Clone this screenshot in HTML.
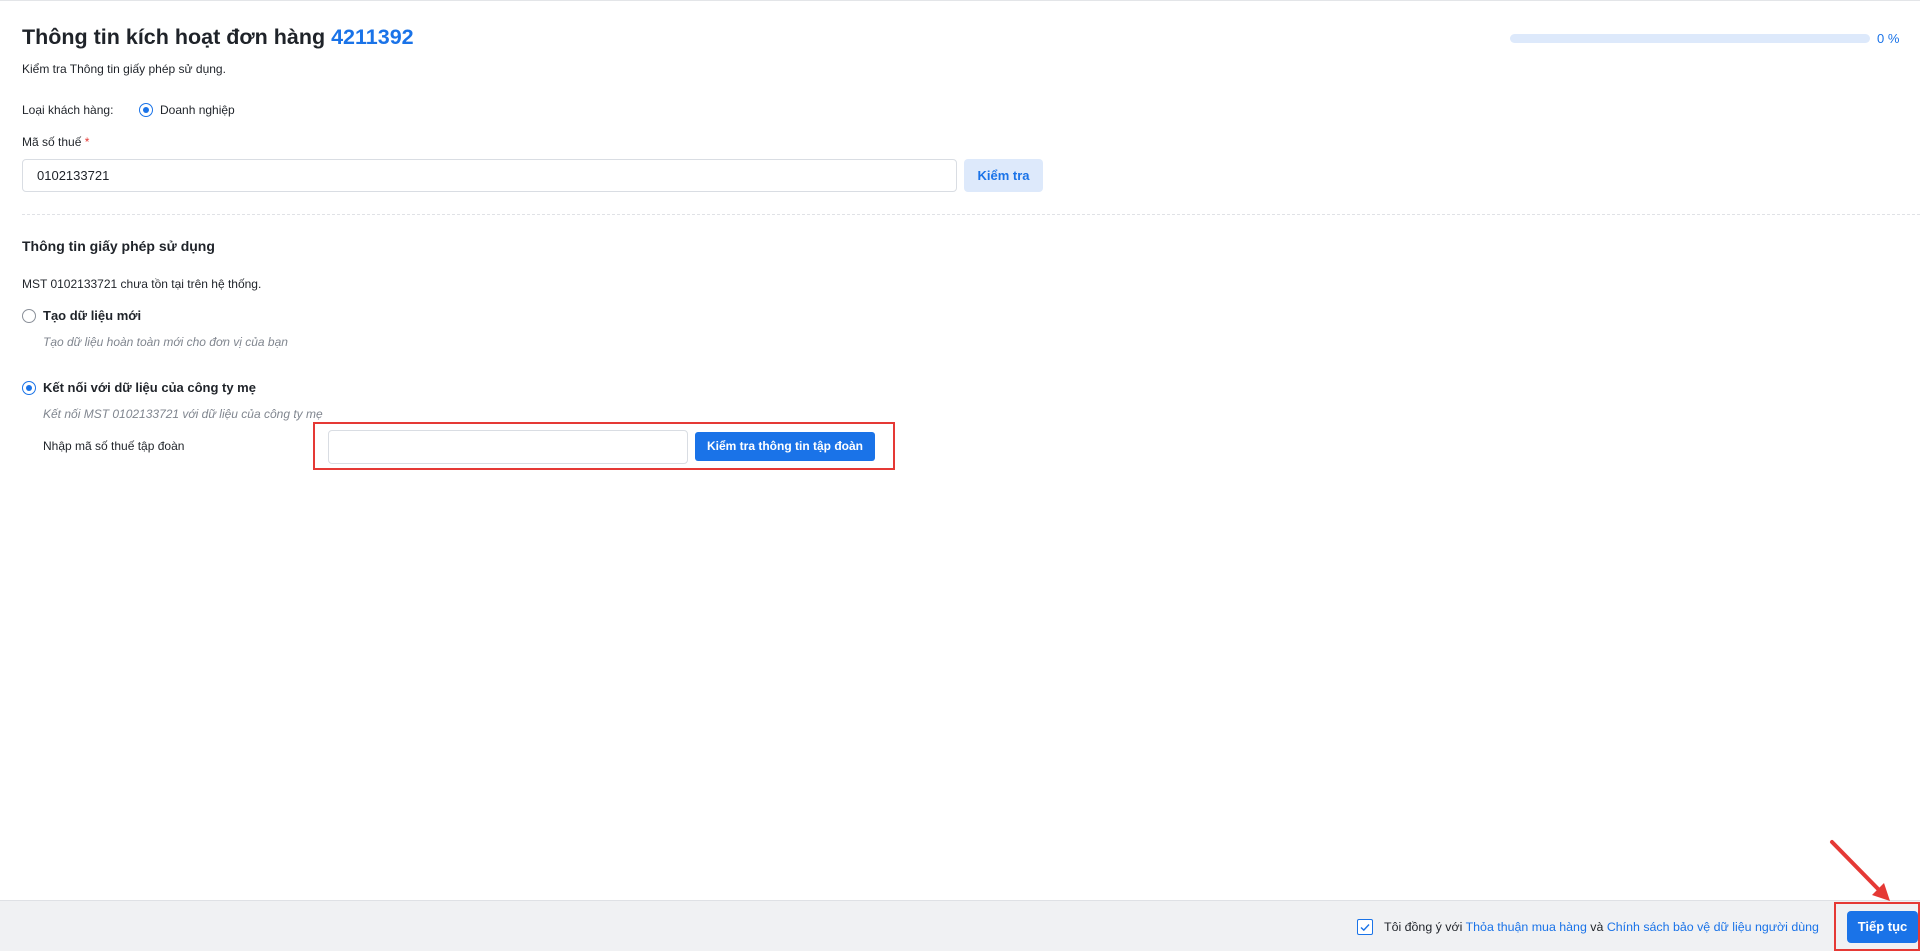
<!DOCTYPE html>
<html><head><meta charset="utf-8"><style>
*{box-sizing:border-box;margin:0;padding:0}
body{width:1920px;height:951px;position:relative;background:#fff;font-family:"Liberation Sans",Arial,sans-serif;color:#1f2329;overflow:hidden;font-size:13px}
.a{position:absolute;white-space:nowrap}
.radio{position:absolute;width:14px;height:14px;border-radius:50%;border:1px solid #8a9099;background:#fff}
.radio.on{border-color:#1a73e8}
.radio.on::after{content:"";position:absolute;left:3px;top:3px;width:6px;height:6px;border-radius:50%;background:#1a73e8}
.inp{position:absolute;border:1px solid #d9dde3;border-radius:4px;background:#fff}
.it{font-style:italic;color:#80868f}
</style></head><body>
<div class="a" style="left:0;top:0;width:1920px;height:1px;background:#e3e5e8"></div>
<div class="a" style="left:22px;top:25px;font-size:21.5px;font-weight:bold;color:#1f2329">Thông tin kích hoạt đơn hàng <span style="color:#1a73e8">4211392</span></div>
<div class="a" style="left:22px;top:62px;font-size:12px">Kiểm tra Thông tin giấy phép sử dụng.</div>
<div class="a" style="left:1510px;top:34px;width:360px;height:9px;border-radius:5px;background:#dde9fb"></div>
<div class="a" style="left:1877px;top:31px;font-size:13px;color:#1a73e8">0 %</div>

<div class="a" style="left:22px;top:103px;font-size:12px">Loại khách hàng:</div>
<div class="radio on" style="left:139px;top:103px"></div>
<div class="a" style="left:160px;top:103px;font-size:12px">Doanh nghiệp</div>

<div class="a" style="left:22px;top:135px;font-size:12px">Mã số thuế <span style="color:#e53935">*</span></div>
<div class="inp" style="left:22px;top:159px;width:935px;height:33px"></div>
<div class="a" style="left:37px;top:168px;font-size:13px">0102133721</div>
<div class="a" style="left:964px;top:159px;width:79px;height:33px;border-radius:4px;background:#dde9fb;color:#1a73e8;font-weight:bold;font-size:13px;text-align:center;line-height:33px">Kiểm tra</div>
<div class="a" style="left:22px;top:214px;width:1898px;border-top:1px dashed #e0e2e6"></div>

<div class="a" style="left:22px;top:238px;font-size:14px;font-weight:bold">Thông tin giấy phép sử dụng</div>
<div class="a" style="left:22px;top:277px;font-size:12px">MST 0102133721 chưa tồn tại trên hệ thống.</div>
<div class="radio" style="left:22px;top:309px"></div>
<div class="a" style="left:43px;top:308px;font-size:13px;font-weight:bold">Tạo dữ liệu mới</div>
<div class="a it" style="left:43px;top:335px;font-size:12px">Tạo dữ liệu hoàn toàn mới cho đơn vị của bạn</div>
<div class="radio on" style="left:22px;top:381px"></div>
<div class="a" style="left:43px;top:380px;font-size:13px;font-weight:bold">Kết nối với dữ liệu của công ty mẹ</div>
<div class="a it" style="left:43px;top:407px;font-size:12px">Kết nối MST 0102133721 với dữ liệu của công ty mẹ</div>
<div class="a" style="left:43px;top:439px;font-size:12px">Nhập mã số thuế tập đoàn</div>
<div class="a" style="left:313px;top:422px;width:582px;height:48px;border:2px solid #e53935"></div>
<div class="inp" style="left:328px;top:430px;width:360px;height:34px"></div>
<div class="a" style="left:695px;top:432px;width:180px;height:29px;border-radius:3px;background:#1a73e8;color:#fff;font-weight:bold;font-size:12px;text-align:center;line-height:29px">Kiểm tra thông tin tập đoàn</div>

<div class="a" style="left:0;top:900px;width:1920px;height:51px;background:#f0f1f3;border-top:1px solid #dfe1e5"></div>
<div class="a" style="left:1357px;top:919px;width:16px;height:16px;border:1px solid #1a73e8;border-radius:2px;background:#fff"></div>
<svg class="a" style="left:1357px;top:919px" width="16" height="16"><path d="M4 8.5l2.8 2.6L12 5.5" fill="none" stroke="#1a73e8" stroke-width="1.4"/></svg>
<div class="a" style="left:1384px;top:920px;font-size:12.4px;color:#1f2329">Tôi đồng ý với <span style="color:#1a73e8">Thỏa thuận mua hàng</span> và <span style="color:#1a73e8">Chính sách bảo vệ dữ liệu người dùng</span></div>
<div class="a" style="left:1834px;top:902px;width:86px;height:49px;border:2px solid #e53935"></div>
<div class="a" style="left:1847px;top:911px;width:71px;height:32px;border-radius:4px;background:#1a73e8;color:#fff;font-weight:bold;font-size:13px;text-align:center;line-height:32px">Tiếp tục</div>
<svg class="a" style="left:1820px;top:835px" width="100" height="75"><line x1="12" y1="7" x2="62" y2="58" stroke="#e53935" stroke-width="4" stroke-linecap="round"/><path d="M70 66 L52 60 L64 48 Z" fill="#e53935"/></svg>
</body></html>
